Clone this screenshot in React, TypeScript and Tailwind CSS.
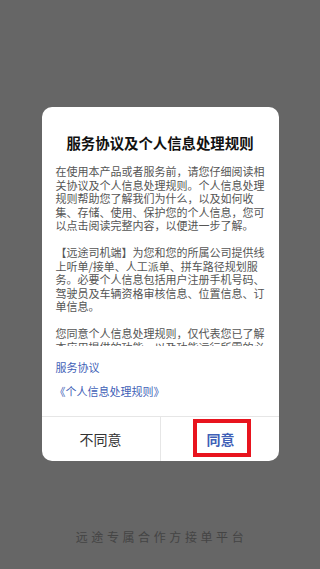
const body_paragraphs = [
  '在使用本产品或者服务前，请您仔细阅读相关协议及个人信息处理规则。个人信息处理规则帮助您了解我们为什么，以及如何收集、存储、使用、保护您的个人信息，您可以点击阅读完整内容，以便进一步了解。',
  '【远途司机端】为您和您的所属公司提供线上听单/接单、人工派单、拼车路径规划服务。必要个人信息包括用户注册手机号码、驾驶员及车辆资格审核信息、位置信息、订单信息。',
  '您同意个人信息处理规则，仅代表您已了解本应用提供的功能，以及功能运行所需的必要个人信息，并不代表您已同意我们可以收集非必要个人信息。',
]

const App = () => {
  return (
    <div
      className="w-[320px] h-[569px] bg-[#666666] flex flex-col items-center pt-[107px] overflow-hidden"
      style={{ fontFamily: '"Noto Sans CJK SC", "Noto Sans", sans-serif' }}
    >
      <div className="w-[237px] bg-white rounded-[10px] flex flex-col overflow-hidden">
        <p className="pt-[26px] text-center text-[14.4px] leading-[20px] font-semibold text-[#111]">服务协议及个人信息处理规则</p>
        <div className="mt-[12px] h-[181px] overflow-hidden px-[14px]">
          {body_paragraphs.map((item, index) => (
            <p key={index} className="text-[11px] leading-[13.5px] text-[#555] mb-[13.5px] break-all">{item}</p>
          ))}
        </div>
        <div className="px-[14px] pt-[11px] pb-[15px] flex flex-col gap-[4px]">
          <p className="text-[11px] leading-[20px] text-[#3f5fb7]">服务协议</p>
          <p className="text-[11px] leading-[20px] text-[#3f5fb7] -ml-[1px]">《个人信息处理规则》</p>
        </div>
        <div className="flex border-t border-[#e6e6e6] h-[45px]">
          <button className="flex-1 flex items-center justify-center text-[14px] text-[#333] border-r border-[#e6e6e6]">不同意</button>
          <button className="relative flex-1 flex items-center justify-center text-[14px] font-semibold text-[#3f5fb7]">
            <span className="pl-[2px]">同意</span>
            <span className="absolute left-[32px] top-[2px] w-[58px] h-[38px] border-[4px] border-[#e8141e]"></span>
          </button>
        </div>
      </div>
      <p className="mt-[68px] text-[12px] leading-[16px] tracking-[3.6px] text-[#444] pl-[3px]">远途专属合作方接单平台</p>
    </div>
  )
}

export default App
